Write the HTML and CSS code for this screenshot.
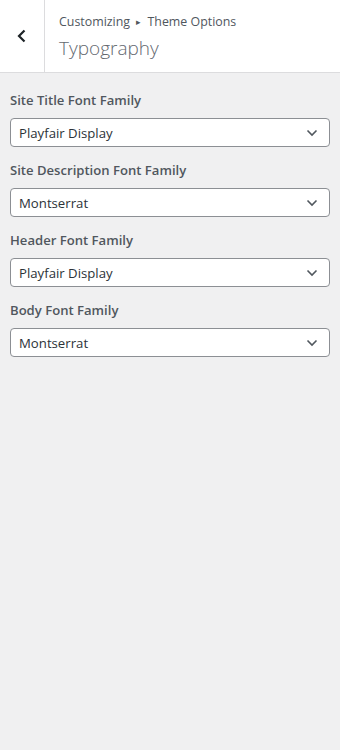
FILE: index.html
```html
<!DOCTYPE html>
<html>
<head>
<meta charset="utf-8">
<link rel="stylesheet" href="styles.css">
</head>
<body>
<div class="panel">
  <header class="head">
    <button class="back" aria-label="Back">
      <svg width="12" height="14" viewBox="0 0 12 14"><path d="M8.5 1.5 L3 7 L8.5 12.5" fill="none" stroke="#1d2327" stroke-width="2.2"/></svg>
    </button>
    <div class="titles">
      <div class="crumb">Customizing <span class="tri">▸</span> Theme Options</div>
      <h1 class="title">Typography</h1>
    </div>
  </header>
  <div class="controls">
    <div class="ctrl">
      <label class="lbl">Site Title Font Family</label>
      <div class="select"><span>Playfair Display</span><svg class="chev" width="12" height="8" viewBox="0 0 12 8"><path d="M1.5 1.5 L6 6 L10.5 1.5" fill="none" stroke="#50575e" stroke-width="1.6"/></svg></div>
    </div>
    <div class="ctrl">
      <label class="lbl">Site Description Font Family</label>
      <div class="select"><span>Montserrat</span><svg class="chev" width="12" height="8" viewBox="0 0 12 8"><path d="M1.5 1.5 L6 6 L10.5 1.5" fill="none" stroke="#50575e" stroke-width="1.6"/></svg></div>
    </div>
    <div class="ctrl">
      <label class="lbl">Header Font Family</label>
      <div class="select"><span>Playfair Display</span><svg class="chev" width="12" height="8" viewBox="0 0 12 8"><path d="M1.5 1.5 L6 6 L10.5 1.5" fill="none" stroke="#50575e" stroke-width="1.6"/></svg></div>
    </div>
    <div class="ctrl">
      <label class="lbl">Body Font Family</label>
      <div class="select"><span>Montserrat</span><svg class="chev" width="12" height="8" viewBox="0 0 12 8"><path d="M1.5 1.5 L6 6 L10.5 1.5" fill="none" stroke="#50575e" stroke-width="1.6"/></svg></div>
    </div>
  </div>
</div>
</body>
</html>
```
FILE: styles.css
```css
html, body {
  margin: 0;
  padding: 0;
  height: 100%;
  background: #f0f0f1;
  font-family: "Open Sans", "Noto Sans", sans-serif;
}
.panel {
  min-height: 750px;
  background: #f0f0f1;
}
.head {
  display: flex;
  height: 73px;
  background: #fff;
  border-bottom: 1px solid #dcdcde;
  box-sizing: border-box;
}
.back {
  width: 45px;
  flex: none;
  border: 0;
  border-right: 1px solid #dcdcde;
  background: #fff;
  padding: 0;
  display: flex;
  align-items: center;
  justify-content: center;
}
.titles {
  padding: 13px 0 0 14px;
}
.crumb {
  font-size: 12.4px;
  line-height: 18px;
  color: #50575e;
}
.tri {
  font-size: 9px;
  position: relative;
  top: -1px;
  margin: 0 3px;
}
.title {
  margin: 3px 0 0;
  font-size: 19px;
  line-height: 26px;
  font-weight: 300;
  color: #646970;
}
.controls {
  padding: 17px 10px 0;
  display: flex;
  flex-direction: column;
  gap: 13px;
}
.ctrl {
  display: flex;
  flex-direction: column;
  gap: 8px;
}
.lbl {
  font-size: 13.1px;
  line-height: 20px;
  font-weight: 600;
  color: #50575e;
}
.select {
  height: 29px;
  box-sizing: border-box;
  background: #fff;
  border: 1px solid #8c8f94;
  border-radius: 4px;
  display: flex;
  align-items: center;
  justify-content: space-between;
  padding: 0 11px 0 8px;
  font-size: 13.2px;
  color: #2c3338;
}
.chev {
  display: block;
}
```
